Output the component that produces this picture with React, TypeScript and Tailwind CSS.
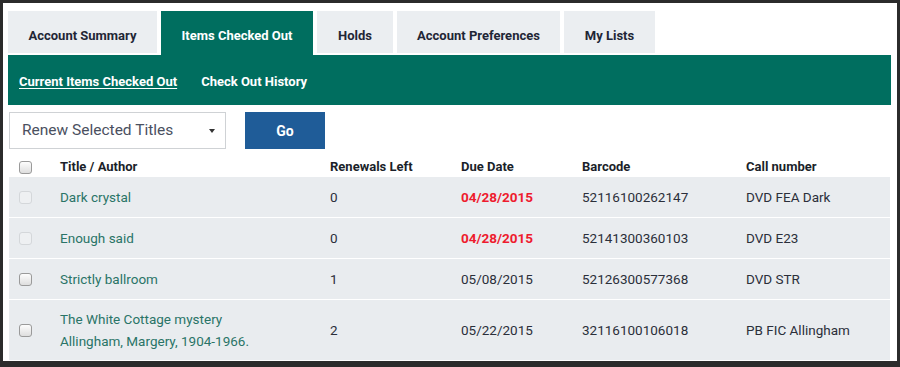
import React from 'react';

// Account page - "Items Checked Out" tab with the checked-out items table

const FONT = 'Roboto, "Open Sans", "Liberation Sans", sans-serif';

const tabs = [
  { label: 'Account Summary', width: 'w-[149px]' },
  { label: 'Items Checked Out', width: 'w-[152px]', active: true },
  { label: 'Holds', width: 'w-[76px]' },
  { label: 'Account Preferences', width: 'w-[163px]' },
  { label: 'My Lists', width: 'w-[91px]' },
];

interface Item {
  title: string;
  author?: string;
  renewals: number;
  due: string;
  overdue?: boolean;
  barcode: string;
  callNumber: string;
  disabled?: boolean;
}

const items: Item[] = [
  { title: 'Dark crystal', renewals: 0, due: '04/28/2015', overdue: true, barcode: '52116100262147', callNumber: 'DVD FEA Dark', disabled: true },
  { title: 'Enough said', renewals: 0, due: '04/28/2015', overdue: true, barcode: '52141300360103', callNumber: 'DVD E23', disabled: true },
  { title: 'Strictly ballroom', renewals: 1, due: '05/08/2015', barcode: '52126300577368', callNumber: 'DVD STR' },
  { title: 'The White Cottage mystery', author: 'Allingham, Margery, 1904-1966.', renewals: 2, due: '05/22/2015', barcode: '32116100106018', callNumber: 'PB FIC Allingham' },
];

const Checkbox: React.FC<{ disabled?: boolean }> = ({ disabled }) => (
  <span
    className={`block w-[13px] h-[13px] rounded-[3px] border ${
      disabled ? 'border-[#d4d7da] bg-[#eef0f2]' : 'border-[#9a9a9a] bg-gradient-to-b from-[#fdfdfd] to-[#dedede]'
    }`}
  />
);

const COLS = 'grid grid-cols-[51px_270px_131px_121px_164px_1fr] items-center';

export default function App() {
  return (
    <div className="w-[900px] h-[367px] bg-[#2b2b2b] pt-[3px] pl-[3px]" style={{ fontFamily: FONT }}>
      <div className="w-[894px] h-[358px] bg-white pt-[8px] pl-[5px] pr-[6px]">
        {/* Tabs */}
        <div className="flex items-end gap-[4px] h-[44px]">
          {tabs.map((t) =>
            t.active ? (
              <div
                key={t.label}
                className={`${t.width} h-[44px] bg-[#006e5f] text-white text-[13px] font-bold flex items-center justify-center pt-[5px]`}
              >
                {t.label}
              </div>
            ) : (
              <div
                key={t.label}
                className={`${t.width} h-[42px] mb-[2px] bg-[#ebeef1] text-[#1f2636] text-[13px] font-bold flex items-center justify-center pt-[7px]`}
              >
                {t.label}
              </div>
            )
          )}
        </div>

        {/* Sub navigation */}
        <div className="h-[50px] bg-[#006e5f] flex items-center gap-[24px] pl-[11px] pt-[3px] text-white text-[13px] font-bold">
          <span className="underline underline-offset-2">Current Items Checked Out</span>
          <span>Check Out History</span>
        </div>

        {/* Renew controls */}
        <div className="flex items-center gap-[19px] mt-[7px] pl-[1px]">
          <div className="w-[217px] h-[37px] border border-[#cfd2d5] flex items-center justify-between pl-[12px] pr-[10px] text-[15.5px] text-[#4a5060]">
            <span>Renew Selected Titles</span>
            <span className="w-0 h-0 border-l-[3px] border-r-[3px] border-t-[4px] border-l-transparent border-r-transparent border-t-[#333]" />
          </div>
          <button className="w-[80px] h-[37px] bg-[#1f5c98] text-white text-[14px] font-bold pt-[1px]">Go</button>
        </div>

        {/* Table */}
        <div className="mt-[6px] ml-[1px] w-[881px] text-[13.5px]">
          <div className={`${COLS} h-[22px] pt-[2px] text-[13px] font-bold text-[#1b1f2a]`}>
            <div className="pl-[10px]">
              <Checkbox />
            </div>
            <div>Title / Author</div>
            <div>Renewals Left</div>
            <div>Due Date</div>
            <div>Barcode</div>
            <div>Call number</div>
          </div>
          <div className="flex flex-col gap-[1px]">
            {items.map((it) => (
              <div key={it.barcode} className={`${COLS} ${it.author ? 'h-[60px]' : 'h-[40px]'} bg-[#e9ecef] text-[#2b2f3a]`}>
                <div className="pl-[10px]">
                  <Checkbox disabled={it.disabled} />
                </div>
                <div className="text-[#2a7467] leading-[22px]">
                  <div>{it.title}</div>
                  {it.author && <div>{it.author}</div>}
                </div>
                <div>{it.renewals}</div>
                <div className={it.overdue ? 'text-[#ee1b2e] font-bold' : ''}>{it.due}</div>
                <div>{it.barcode}</div>
                <div>{it.callNumber}</div>
              </div>
            ))}
          </div>
        </div>
      </div>
    </div>
  );
}
